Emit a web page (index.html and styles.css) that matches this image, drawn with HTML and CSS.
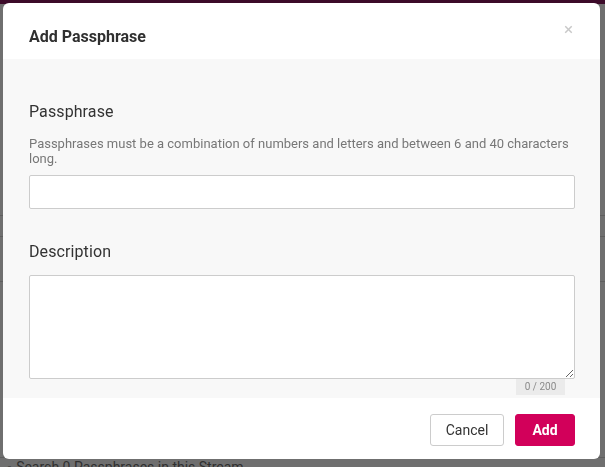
FILE: index.html
```html
<!DOCTYPE html>
<html>
<head>
<meta charset="utf-8">
<link rel="stylesheet" href="styles.css">
</head>
<body>
<div class="page">
  <div class="topbar"></div>
  <div class="bg-content">
    <div class="bg-row r1"></div>
    <div class="bg-row r2"></div>
    <div class="bg-row r3"></div>
    <div class="bg-search"><span class="bg-icon">○</span> Search 0 Passphrases in this Stream</div>
  </div>
</div>
<div class="modal">
  <div class="modal-header">
    <h4 class="modal-title">Add Passphrase</h4>
    <span class="close">×</span>
  </div>
  <div class="modal-body">
    <div class="group">
      <label class="label">Passphrase</label>
      <p class="help">Passphrases must be a combination of numbers and letters and between 6 and 40 characters long.</p>
      <input class="input" type="text">
    </div>
    <div class="group group2">
      <label class="label">Description</label>
      <textarea class="textarea"></textarea>
      <div class="counter-row"><span class="counter">0 / 200</span></div>
    </div>
  </div>
  <div class="modal-footer">
    <button class="btn btn-cancel">Cancel</button>
    <button class="btn btn-add">Add</button>
  </div>
</div>
</body>
</html>
```
FILE: styles.css
```css
html, body {
  margin: 0;
  padding: 0;
  height: 100%;
  overflow: hidden;
}
body {
  background: #6f6f6f;
  font-family: Roboto, "Liberation Sans", sans-serif;
}
.page {
  height: 100%;
  display: flex;
  flex-direction: column;
}
.topbar {
  height: 4px;
  background: #3c0a29;
}
.bg-content {
  flex: 1;
  display: flex;
  flex-direction: column;
}
.bg-row {
  border-bottom: 1px solid #5e5e5e;
}
.r1 { height: 211px; }
.r2 { height: 20px; }
.r3 { height: 44px; }
.bg-search {
  margin-top: auto;
  color: #2f2f2f;
  font-size: 14px;
  padding: 0 0 0 6px;
  height: 9px;
  line-height: 19px;
  border-top: 1px solid #5e5e5e;
  overflow: hidden;
}
.bg-icon { font-size: 11px; }

.modal {
  position: fixed;
  left: 3px;
  top: 3px;
  width: 597px;
  height: 456px;
  background: #fff;
  border-radius: 6px;
  display: flex;
  flex-direction: column;
  overflow: hidden;
}
.modal-header {
  height: 56px;
  flex: none;
  display: flex;
  align-items: flex-start;
  justify-content: space-between;
  padding: 24px 27px 0 26px;
  box-sizing: border-box;
}
.modal-title {
  margin: 0;
  font-size: 16px;
  line-height: 19px;
  font-weight: 700;
  color: #303030;
}
.close {
  color: #c8c8c8;
  font-size: 17px;
  line-height: 17px;
  margin-top: -6px;
}
.modal-body {
  flex: 1;
  background: #f8f8f8;
  padding: 43px 25px 3px 26px;
  display: flex;
  flex-direction: column;
}
.group { display: flex; flex-direction: column; }
.group2 { margin-top: 33px; }
.label {
  font-size: 16px;
  line-height: 19px;
  color: #333;
  letter-spacing: 0.1px;
}
.help {
  margin: 16px 0 9px;
  font-size: 13px;
  line-height: 14.5px;
  color: #777;
}
.input {
  height: 34px;
  box-sizing: border-box;
  border: 1px solid #ccc;
  border-radius: 2px;
  background: #fff;
  margin: 0;
}
.textarea {
  margin-top: 14px;
  height: 104px;
  box-sizing: border-box;
  border: 1px solid #ccc;
  border-radius: 2px;
  background: #fff;
  resize: vertical;
}
.counter-row {
  display: flex;
  justify-content: flex-end;
  padding-right: 10px;
}
.counter {
  background: #ebebeb;
  color: #8a8a8a;
  font-size: 10px;
  width: 49px;
  height: 16px;
  line-height: 16px;
  text-align: center;
}
.modal-footer {
  height: 61px;
  flex: none;
  display: flex;
  justify-content: flex-end;
  align-items: flex-start;
  padding: 16px 25px 0 0;
  box-sizing: border-box;
  gap: 11px;
}
.btn {
  height: 32px;
  font-family: Roboto, "Liberation Sans", sans-serif;
  font-size: 14px;
  border-radius: 3px;
  cursor: pointer;
}
.btn-cancel {
  width: 74px;
  background: #fff;
  border: 1px solid #ccc;
  color: #333;
}
.btn-add {
  width: 60px;
  background: #d2005a;
  border: 1px solid #d2005a;
  color: #fff;
  font-weight: 700;
}
```
